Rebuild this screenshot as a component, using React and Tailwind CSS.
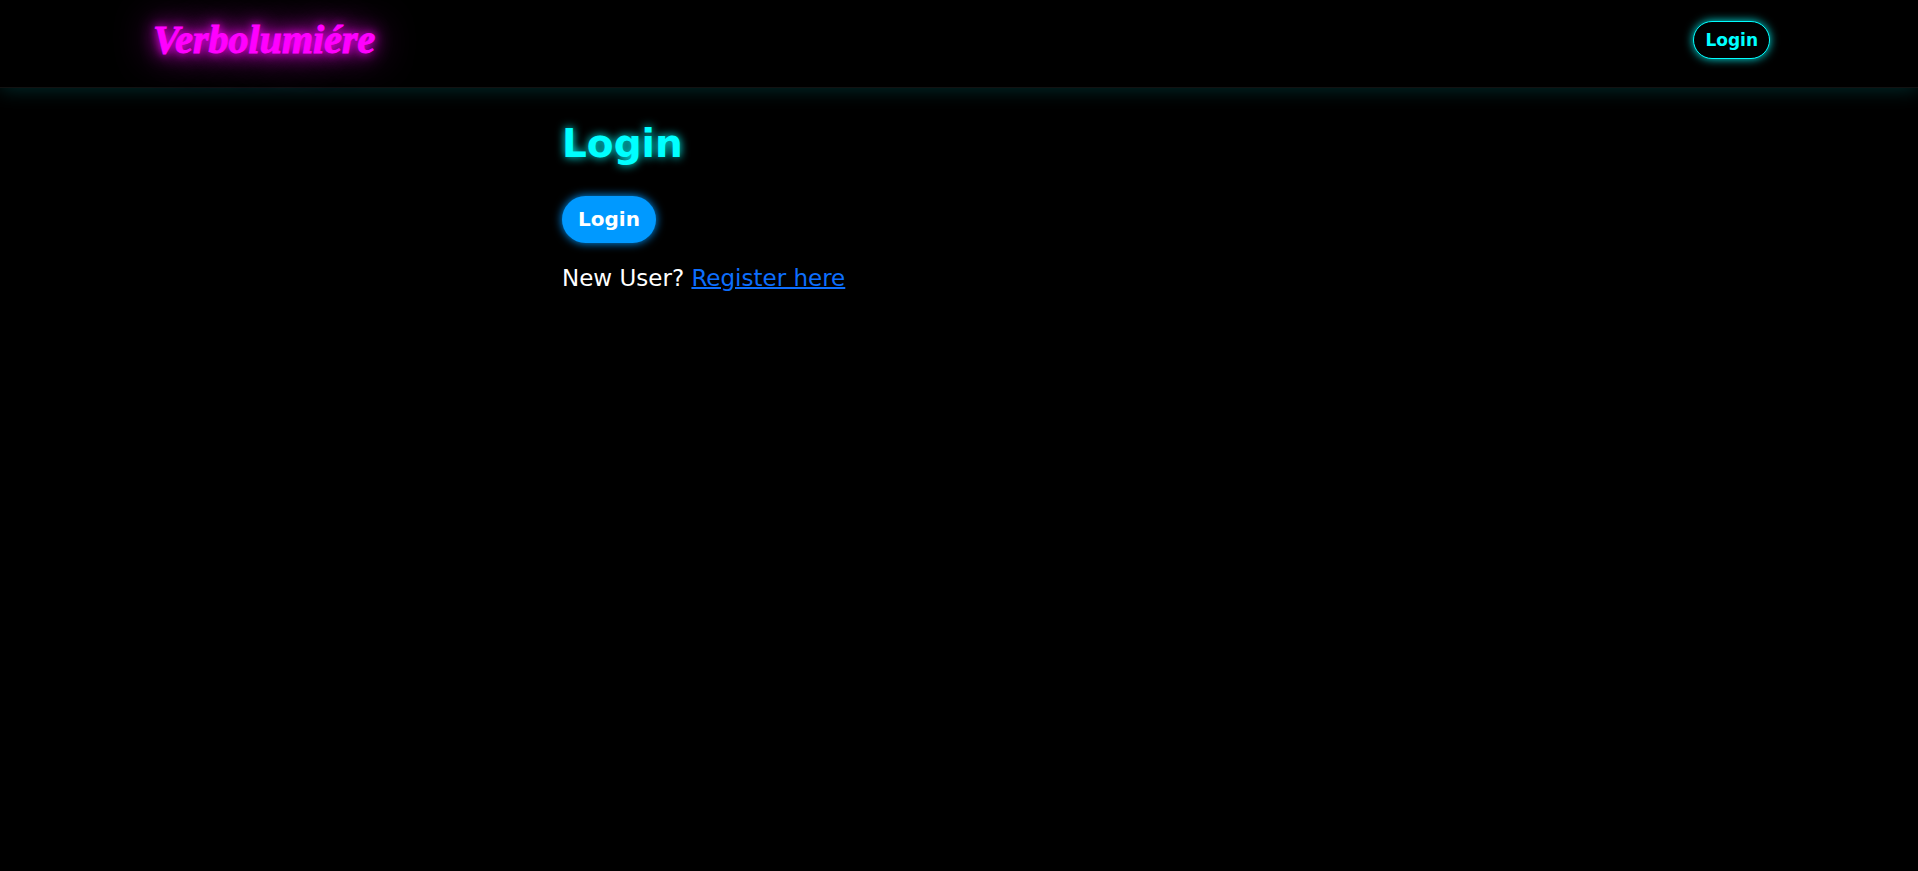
export default function App() {
  return (
    <div className="min-h-screen bg-black font-['DejaVu_Sans',sans-serif] text-white">
      <header className="relative border-b border-[#121212] bg-black shadow-[0_0_20px_rgba(0,255,255,0.2)]">
        <nav className="flex items-start justify-between pt-4 pr-[148px] pb-[23px] pl-[153px]">
          <a
            href="#home"
            className="font-['Liberation_Serif',serif] text-[40px] leading-[48px] font-bold text-[#ff00ff] italic [-webkit-text-stroke:1px_#ff00ff] [text-shadow:0_0_10px_#ff00ff,0_0_20px_#ff00ff,0_0_40px_#ff00ff]"
          >
            Verbolumiére
          </a>
          <button
            type="button"
            className="mt-[5px] rounded-[20px] border border-[#00ffff] bg-black px-[11px] py-[6px] text-[17px] leading-6 font-bold text-[#00ffff] shadow-[0_0_10px_rgba(0,255,255,0.9)]"
          >
            Login
          </button>
        </nav>
      </header>
      <main className="mx-auto max-w-[794px] pt-8">
        <h1 className="text-[39px] leading-[48px] font-bold text-[#00ffff] [text-shadow:0_0_10px_#00ffff]">
          Login
        </h1>
        <button
          type="button"
          className="mt-7 block rounded-[25px] bg-[#0099ff] px-4 py-2 text-[20px] leading-[31px] font-bold text-white shadow-[0_0_10px_#0099ff]"
        >
          Login
        </button>
        <p className="mt-5 text-[23px] leading-[30px]">
          New User?{" "}
          <a href="#register" className="text-[#0d6efd] underline decoration-2">
            Register here
          </a>
        </p>
      </main>
    </div>
  );
}
